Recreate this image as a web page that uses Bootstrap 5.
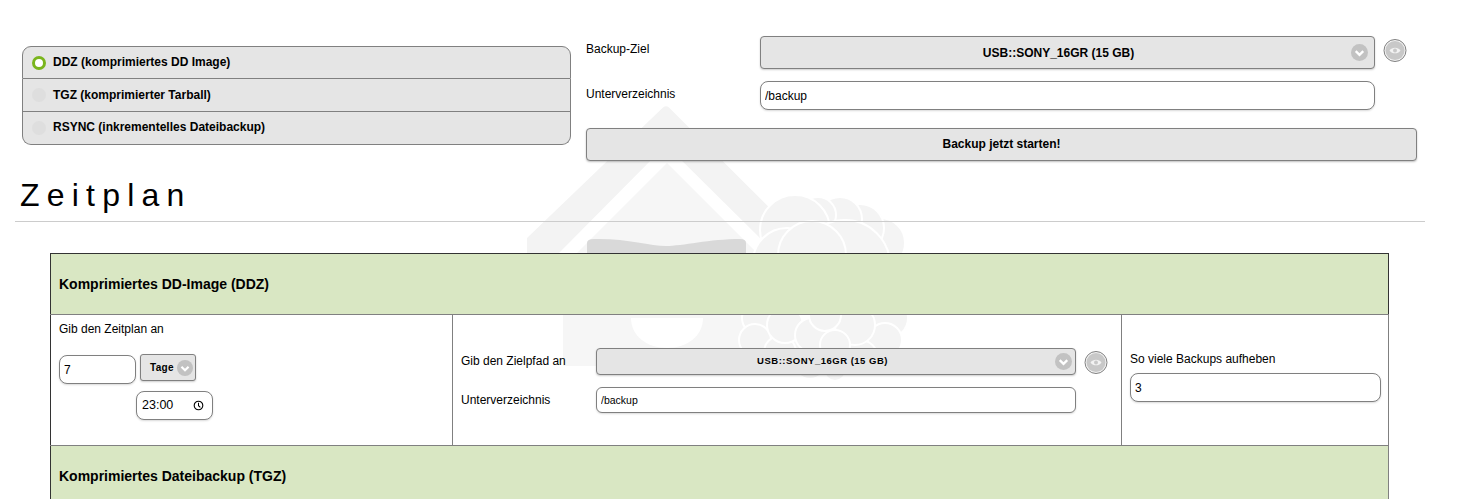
<!DOCTYPE html>
<html lang="de">
<head>
<meta charset="utf-8">
<title>Backup</title>
<link href="https://cdn.jsdelivr.net/npm/bootstrap@5.3.0/dist/css/bootstrap.min.css" rel="stylesheet">
<style>
html,body{height:499px;overflow:hidden;background:#fff}
body{font-family:"Liberation Sans",Arial,sans-serif;font-size:12px;color:#000}
.pagewrap{position:relative;width:1462px;height:499px;overflow:hidden;padding:36px 37px 0 15px}
.wm{position:absolute;left:520px;top:100px;width:400px;height:290px;z-index:0}
.above{position:relative;z-index:1}
.topband{display:flex;gap:15px;padding:0 8px 0 7px}
.leftcol{width:549px;padding-top:10px}
.rightcol{width:831px}
.opts{--bs-list-group-border-color:#808080;--bs-list-group-border-radius:9px;--bs-list-group-bg:#e5e5e5;--bs-list-group-color:#000}
.opts .list-group-item{height:33px;padding:0 0 0 9px;display:flex;align-items:center;gap:7px;font-weight:700;font-size:12px;background:#e5e5e5}
.optup{padding-bottom:2px}
.rdo{width:14px;height:14px;border-radius:50%;background:#dedede;flex:none}
.rdo.on{background:#fff;border:3.5px solid #7ab51d}
.fieldrow{display:flex;align-items:flex-start}
.lbl{width:174px;flex:none;line-height:14px;padding-top:6px}
.selbox{background:#e5e5e5;border:1px solid #808080;border-radius:4px;box-shadow:0 1px 2px rgba(0,0,0,.2);font-weight:700;display:flex;align-items:center;justify-content:center;position:relative}
.sel-main{width:615px;height:33px;font-size:12px;padding-right:18px}
.chev{position:absolute;right:6px;top:50%;margin-top:-8.5px;width:17px;height:17px;display:block}
.eyeb{flex:none;display:block}
.txtin.form-control{height:29px;border:1px solid #808080;border-radius:8px;font-size:12px;padding:0 4px;color:#000;box-shadow:0 1px 2px rgba(0,0,0,.15);background:#fff;min-height:0}
.startbtn.btn{display:block;width:831px;height:33px;margin-top:18px;background:#e5e5e5;border:1px solid #808080;border-radius:4px;font-size:12px;font-weight:700;color:#000;padding:0 0 2px;box-shadow:0 1px 2px rgba(0,0,0,.25)}
.ztitle{font-size:32px;font-weight:400;letter-spacing:7.2px;line-height:34px;margin:17px 0 0 5px;color:#000}
.rule{margin:9px 0 31px;border:0;border-top:1px solid #ccc;opacity:1;width:1410px}
.plan{width:1338px;margin:0 0 0 35px;border-collapse:collapse;table-layout:fixed;--bs-table-bg:transparent;background:transparent}
.plan.table>:not(caption)>*>*{border:1px solid #808080;padding:0;background:transparent;box-shadow:none;color:#000}
.plan thead th, .plan .grp th{height:61px;background:#d9e7c3!important;font-size:14px;font-weight:700;padding:0 8px!important;vertical-align:middle}
.plan .firsthead th{border-top-color:#333!important;border-left-color:#333!important;border-right-color:#333!important}
.plan td{height:131px;vertical-align:top}
.plan td:first-child{border-left-color:#333!important}
.plan .grp th{border-left-color:#333!important}
.c1{padding:5px 8px 0!important}
.c2{padding:33px 8px 0!important}
.c3{padding:37px 7px 0 8px!important}
.zrow{display:flex;gap:4px;margin-top:16px;align-items:flex-start}
.num{width:77px!important;margin-top:1px}
.tagesel{width:56px;height:27px;font-size:10px;border-radius:3px;gap:3px;padding-left:9px;justify-content:flex-start;letter-spacing:.3px}
.tagesel svg{width:16px;height:16px;flex:none}
.timebox{width:77px;height:29px;margin:7px 0 0 77px;display:flex;align-items:center;justify-content:space-between;border:1px solid #808080;border-radius:8px;padding:0 8px 0 5px;font-size:12.5px;background:#fff;box-shadow:0 1px 2px rgba(0,0,0,.15)}
.lbl2{width:135px;flex:none;padding-top:6px;line-height:14px}
.sel-sub{width:480px;height:27px;font-size:9.5px;letter-spacing:.5px;padding-right:27px}
.sel-sub .chev{right:3px}
.sub2.form-control{width:480px;height:26px;font-size:10.5px;border-radius:6px}
.lab3{line-height:14px;margin-bottom:7px}
.keep.form-control{height:29px}
.sp1{margin-top:12px}
.sp2{margin-top:12px}
</style>
</head>
<body>
<div class="pagewrap">
  <svg class="wm" viewBox="520 100 400 290" aria-hidden="true">
    <path d="M663 107.5 Q666 105 669 107.5 L805 243 L805 253 L775 253 L666 145 L559 253 L527 253 L527 238 Z" fill="#f3f3f3"/>
    <path d="M667 163 L757 253 L757 314 H800 V366 H563 V253 H577 Z" fill="#f6f6f6"/>
    <path d="M587 243 Q587 239 594 239 C625 238 650 246 666 246 C682 246 710 239 740 239 Q746 239 746 243 V254 H587 Z" fill="#d9d9d9"/>
    <path d="M631 318 H703 C703 336 687 348 667 348 C647 348 631 336 631 318 Z" fill="#fff"/>
    <g fill="#f4f4f4" stroke="#fff" stroke-width="2">
      <circle cx="880" cy="243" r="25"/><circle cx="860" cy="228" r="24"/><circle cx="840" cy="219" r="22"/><circle cx="818" cy="215" r="18"/>
      <circle cx="795" cy="230" r="35"/><circle cx="787" cy="262" r="34"/>
      <circle cx="845" cy="265" r="45"/><circle cx="885" cy="280" r="26"/>
      <circle cx="812" cy="255" r="34"/>
      <circle cx="888" cy="318" r="20"/><circle cx="758" cy="318" r="16"/><circle cx="755" cy="340" r="16"/><circle cx="780" cy="352" r="16"/>
      <circle cx="785" cy="325" r="18"/><circle cx="885" cy="340" r="17"/><circle cx="810" cy="362" r="17"/><circle cx="860" cy="358" r="18"/><circle cx="835" cy="370" r="11"/>
      <circle cx="812" cy="335" r="17"/><circle cx="855" cy="325" r="20"/><circle cx="835" cy="345" r="15"/><circle cx="825" cy="315" r="16"/>
    </g>
  </svg>
  <div class="above">
    <div class="topband">
      <div class="leftcol">
        <div class="list-group opts">
          <div class="list-group-item"><span class="rdo on"></span><span class="optup">DDZ (komprimiertes DD Image)</span></div>
          <div class="list-group-item"><span class="rdo"></span><span>TGZ (komprimierter Tarball)</span></div>
          <div class="list-group-item"><span class="rdo"></span><span class="optup">RSYNC (inkrementelles Dateibackup)</span></div>
        </div>
      </div>
      <div class="rightcol">
        <div class="fieldrow">
          <div class="lbl">Backup-Ziel</div>
          <div class="selbox sel-main">USB::SONY_16GR (15 GB)
            <svg class="chev" viewBox="0 0 18 18"><circle cx="9" cy="9" r="9" fill="#c2c2c2"/><path d="M5 7.5 L9 11.5 L13 7.5" fill="none" stroke="#fff" stroke-width="2.4"/></svg>
          </div>
          <svg class="eyeb ms-2" width="24" height="27" viewBox="0 0 24 27"><circle cx="12" cy="14.5" r="11" fill="#f2f2f2" stroke="#808080"/><circle cx="12" cy="14.5" r="9.5" fill="#c8c8c8"/><path d="M6.5 14.5 C9 10.7 15 10.7 17.5 14.5 C15 18.3 9 18.3 6.5 14.5Z" fill="#f2f2f2"/><circle cx="12" cy="14.5" r="2" fill="#c8c8c8"/></svg>
        </div>
        <div class="fieldrow sp1">
          <div class="lbl">Unterverzeichnis</div>
          <input class="form-control txtin flex-grow-0" style="width:615px" value="/backup">
        </div>
        <button class="btn startbtn" type="button">Backup jetzt starten!</button>
      </div>
    </div>
    <h2 class="ztitle">Zeitplan</h2>
    <hr class="rule">
    <table class="table plan">
      <colgroup><col style="width:402px"><col style="width:669px"><col style="width:267px"></colgroup>
      <thead><tr class="firsthead"><th colspan="3">Komprimiertes DD-Image (DDZ)</th></tr></thead>
      <tbody>
        <tr>
          <td class="c1">
            <div>Gib den Zeitplan an</div>
            <div class="zrow">
              <input class="form-control txtin num" value="7">
              <div class="selbox tagesel">Tage<svg viewBox="0 0 18 18"><circle cx="9" cy="9" r="9" fill="#c2c2c2"/><path d="M5 7.5 L9 11.5 L13 7.5" fill="none" stroke="#fff" stroke-width="2.4"/></svg></div>
            </div>
            <div class="timebox"><span>23:00</span><svg width="11" height="11" viewBox="0 0 12 12"><circle cx="6" cy="6" r="4.7" fill="none" stroke="#000" stroke-width="1.2"/><path d="M6 3 V6.2 L8 8" fill="none" stroke="#000" stroke-width="1.1"/></svg></div>
          </td>
          <td class="c2">
            <div class="fieldrow">
              <div class="lbl2">Gib den Zielpfad an</div>
              <div class="selbox sel-sub">USB::SONY_16GR (15 GB)
                <svg class="chev" viewBox="0 0 18 18"><circle cx="9" cy="9" r="9" fill="#c2c2c2"/><path d="M5 7.5 L9 11.5 L13 7.5" fill="none" stroke="#fff" stroke-width="2.4"/></svg>
              </div>
              <svg class="eyeb ms-2" width="24" height="27" viewBox="0 0 24 27"><circle cx="12" cy="14.5" r="11" fill="#f2f2f2" stroke="#808080"/><circle cx="12" cy="14.5" r="9.5" fill="#c8c8c8"/><path d="M6.5 14.5 C9 10.7 15 10.7 17.5 14.5 C15 18.3 9 18.3 6.5 14.5Z" fill="#f2f2f2"/><circle cx="12" cy="14.5" r="2" fill="#c8c8c8"/></svg>
            </div>
            <div class="fieldrow sp2">
              <div class="lbl2">Unterverzeichnis</div>
              <input class="form-control txtin sub2 flex-grow-0" value="/backup">
            </div>
          </td>
          <td class="c3">
            <div class="lab3">So viele Backups aufheben</div>
            <input class="form-control txtin keep" value="3">
          </td>
        </tr>
        <tr class="grp"><th colspan="3">Komprimiertes Dateibackup (TGZ)</th></tr>
      </tbody>
    </table>
  </div>
</div>
</body>
</html>
